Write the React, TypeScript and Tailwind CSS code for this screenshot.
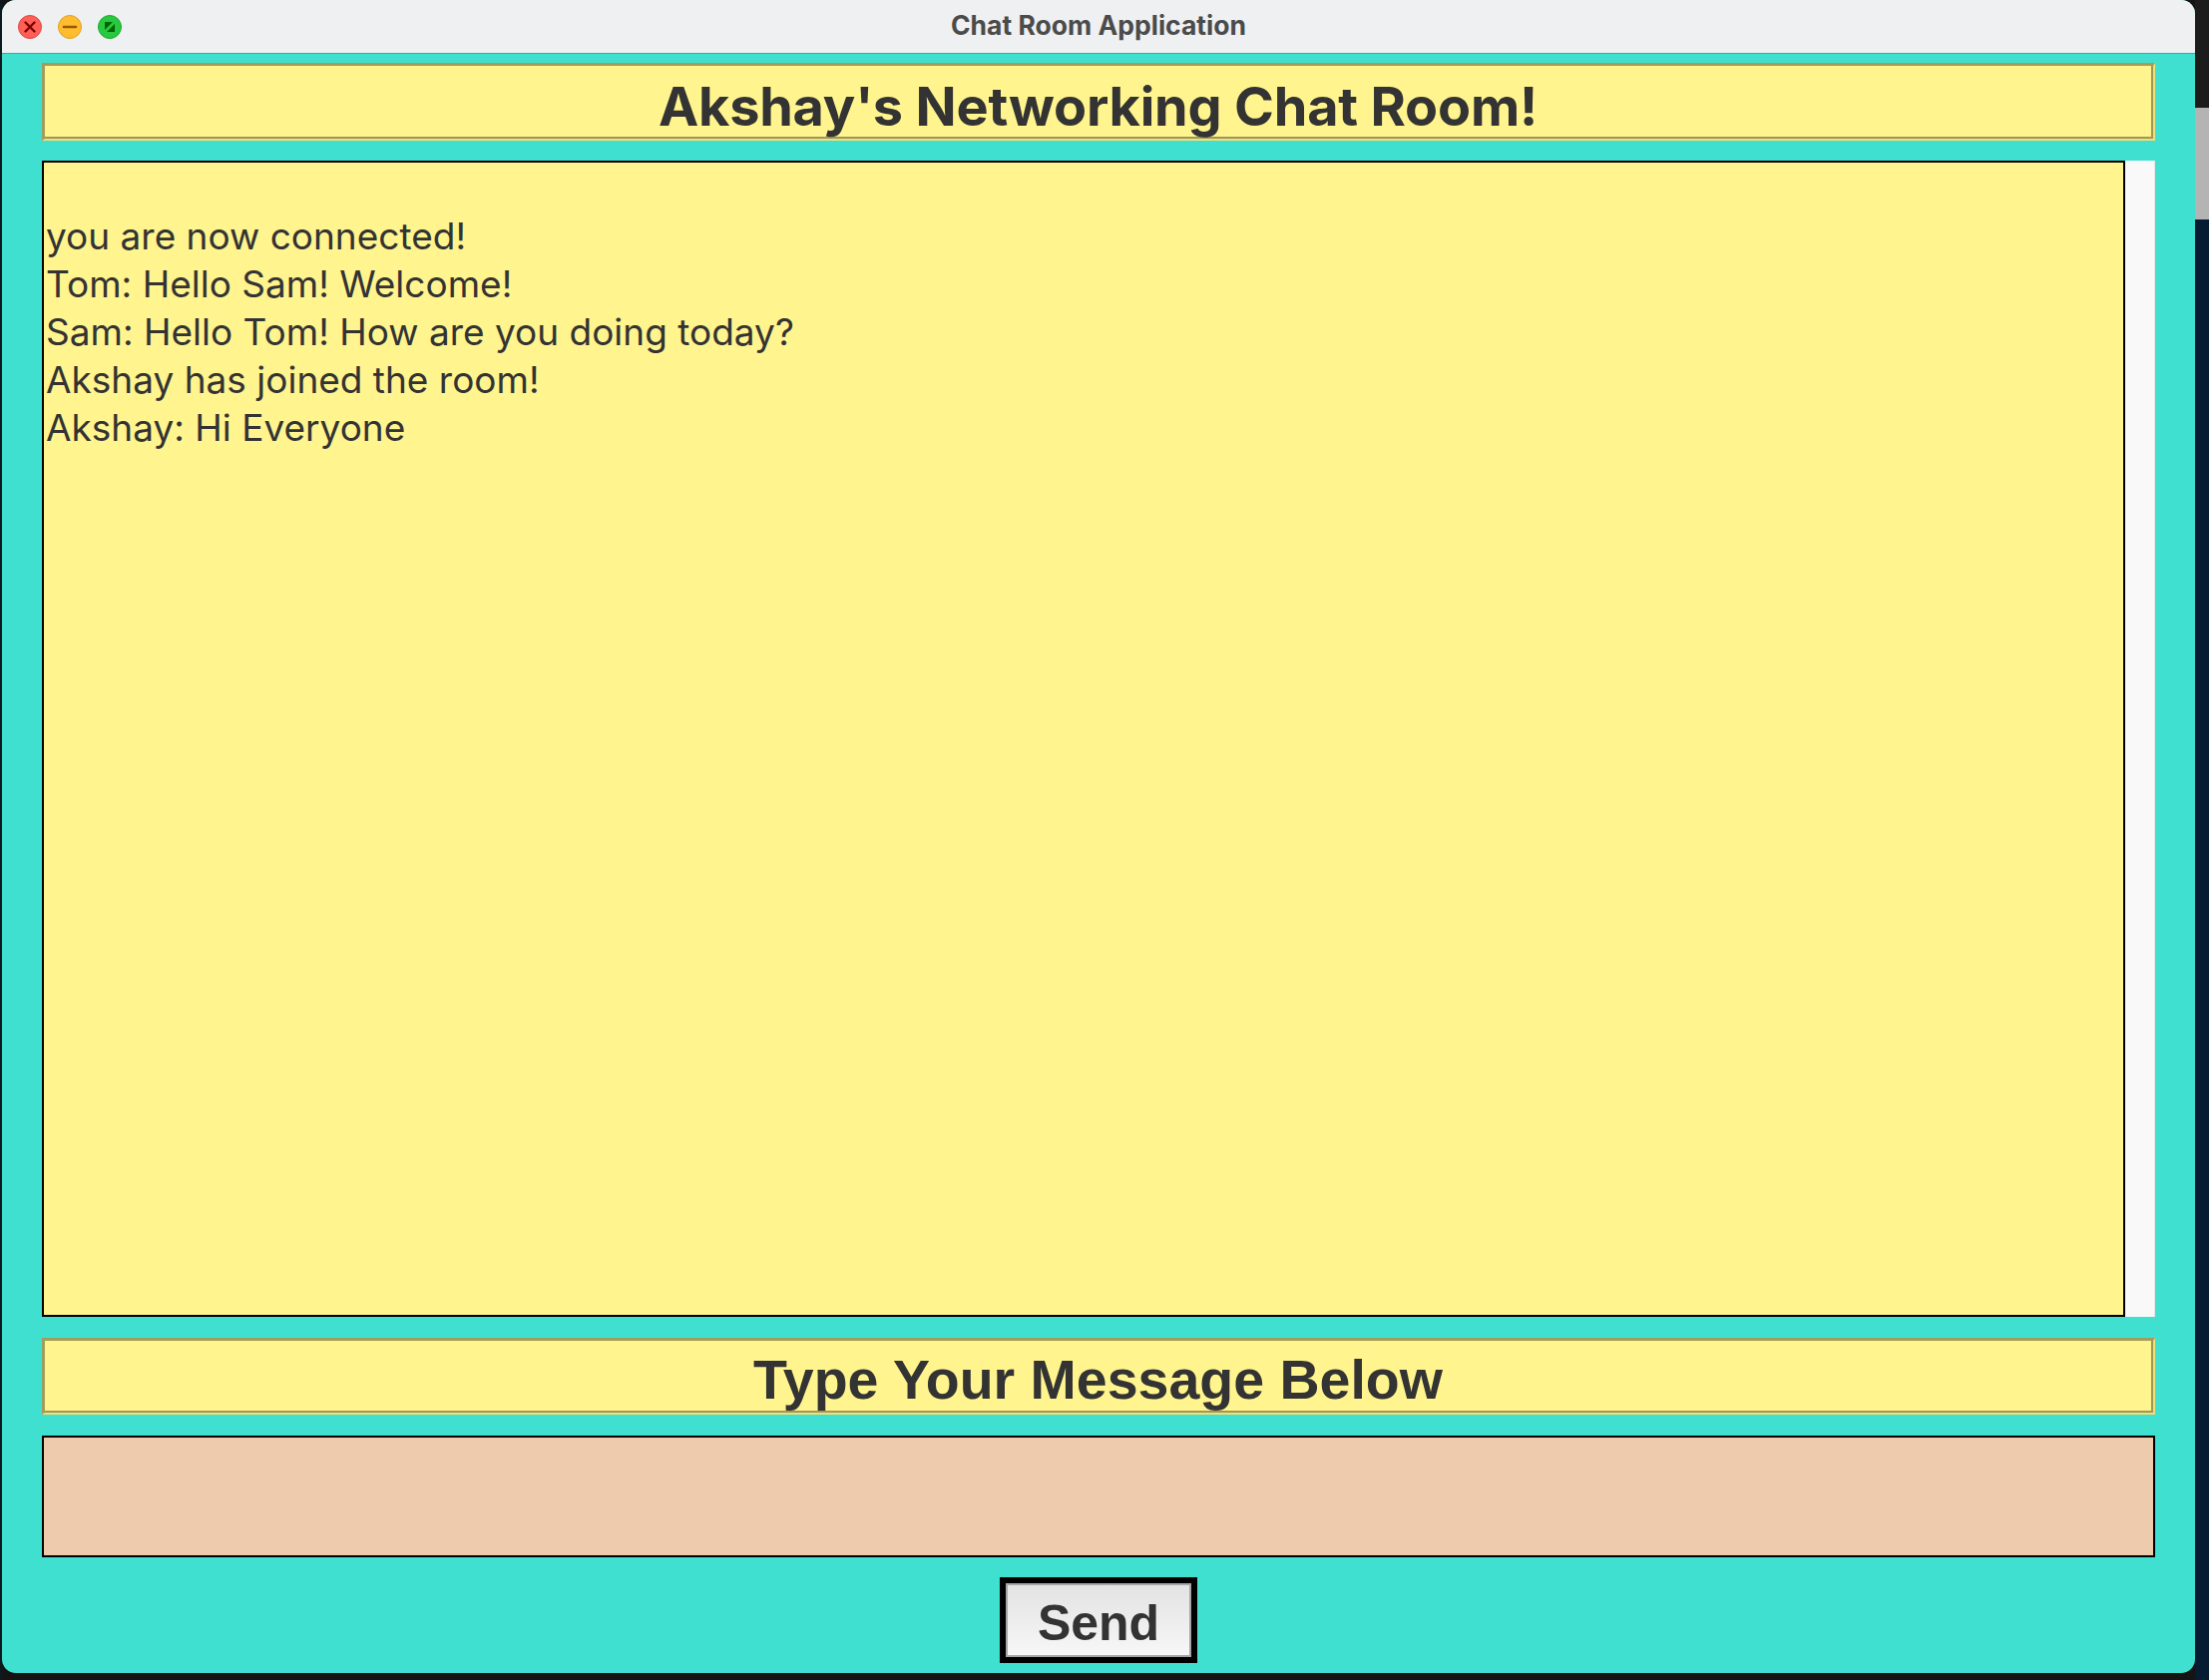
import React from "react";

const bevelOuter =
  "border-t-[3px] border-l-[3px] border-r-[2px] border-b-[2px] border-t-[#a39d5c] border-l-[#a39d5c] border-r-[#f3df78] border-b-[#f3df78]";
const bevelInner =
  "border-r-[2px] border-b-[2px] border-r-[#9d975a] border-b-[#9d975a]";

function TrafficLights() {
  return (
    <div className="flex items-center gap-[16px] pl-[16px]">
      <svg width="24" height="24" viewBox="0 0 24 24">
        <circle cx="12" cy="12" r="11.5" fill="#ff5f57" stroke="#e0443e" strokeWidth="1" />
        <path d="M7.5 7.5 L16.5 16.5 M16.5 7.5 L7.5 16.5" stroke="#7a0000" strokeWidth="2.4" strokeLinecap="round" />
      </svg>
      <svg width="24" height="24" viewBox="0 0 24 24">
        <circle cx="12" cy="12" r="11.5" fill="#febc2e" stroke="#dea123" strokeWidth="1" />
        <path d="M6 12 L18 12" stroke="#995700" strokeWidth="2.6" strokeLinecap="round" />
      </svg>
      <svg width="24" height="24" viewBox="0 0 24 24">
        <circle cx="12" cy="12" r="11.5" fill="#28c840" stroke="#1aab29" strokeWidth="1" />
        <path d="M7 7 L15 7 L7 15 Z" fill="#006500" />
        <path d="M17 9 L17 17 L9 17 Z" fill="#006500" />
      </svg>
    </div>
  );
}

export default function App() {
  const lines = [
    "you are now connected!",
    "Tom: Hello Sam! Welcome!",
    "Sam: Hello Tom! How are you doing today?",
    "Akshay has joined the room!",
    "Akshay: Hi Everyone",
  ];
  return (
    <div className="w-[2214px] h-[1684px] bg-[#141414] flex overflow-hidden">
      <div className="w-[2px] bg-[#0b1a1f]" />
      <div className="w-[2198px] h-[1677px] rounded-[14px] overflow-hidden flex flex-col bg-[#40e0d0]">
        {/* title bar */}
        <div className="h-[54px] bg-[#eff0f2] border-b border-[#27b5a8] relative flex items-center">
          <TrafficLights />
          <div
            className="absolute inset-0 flex items-center justify-center pb-[2px] text-[26.5px] font-bold text-[#4b4b4b]"
            style={{ fontFamily: "Inter, 'Noto Sans', sans-serif" }}
          >
            Chat Room Application
          </div>
        </div>
        {/* content */}
        <div className="flex flex-col px-[40px] pt-[9px]">
          {/* header */}
          <div className={`h-[78px] bg-[#fff48e] ${bevelOuter}`}>
            <div className={`h-full flex items-center justify-center pt-[10px] ${bevelInner}`}>
              <span
                className="text-[54px] font-bold text-[#333333] leading-none tracking-[-0.2px]"
                style={{ fontFamily: "Inter, 'Noto Sans', sans-serif" }}
              >
                Akshay's Networking Chat Room!
              </span>
            </div>
          </div>
          {/* chat area */}
          <div className="mt-[20px] h-[1159px] flex">
            <div
              className="flex-1 bg-[#fff48e] border-2 border-black pl-[2px] pt-[50px] text-[37px] leading-[48px] text-[#333333]"
              style={{ fontFamily: "Inter, 'Noto Sans', sans-serif" }}
            >
              {lines.map((l, i) => (
                <div key={i}>{l}</div>
              ))}
            </div>
            <div className="w-[30px] bg-[#f9f9f9] border-r border-[#e4e4e4]" />
          </div>
          {/* type header */}
          <div className={`mt-[21px] h-[77px] bg-[#fff48e] ${bevelOuter}`}>
            <div className={`h-full flex items-center justify-center pt-[10px] ${bevelInner}`}>
              <span
                className="text-[55.5px] font-bold text-[#333333] leading-none"
                style={{ fontFamily: "'Liberation Sans', Arial, sans-serif" }}
              >
                Type Your Message Below
              </span>
            </div>
          </div>
          {/* input */}
          <div className="mt-[21px] h-[122px] bg-[#eecbad] border-2 border-black" />
          {/* send */}
          <div className="mt-[20px] flex justify-center">
            <div className="w-[198px] h-[86px] border-[6px] border-black bg-black">
              <div className="h-full border-2 border-[#a6a6a6] bg-linear-to-b from-[#e3e3e3] to-[#f7f7f7] flex items-center justify-center pt-[6px]">
                <span
                  className="text-[50px] font-bold text-[#333333] leading-none"
                  style={{ fontFamily: "'Liberation Sans', Arial, sans-serif" }}
                >
                  Send
                </span>
              </div>
            </div>
          </div>
        </div>
      </div>
      {/* desktop strip on the right */}
      <div className="w-[14px] flex flex-col">
        <div className="h-[108px] bg-[#1c1c1c]" />
        <div className="h-[112px] bg-[#b4b4b4]" />
        <div className="flex-1 bg-[#051c33]" />
      </div>
    </div>
  );
}
